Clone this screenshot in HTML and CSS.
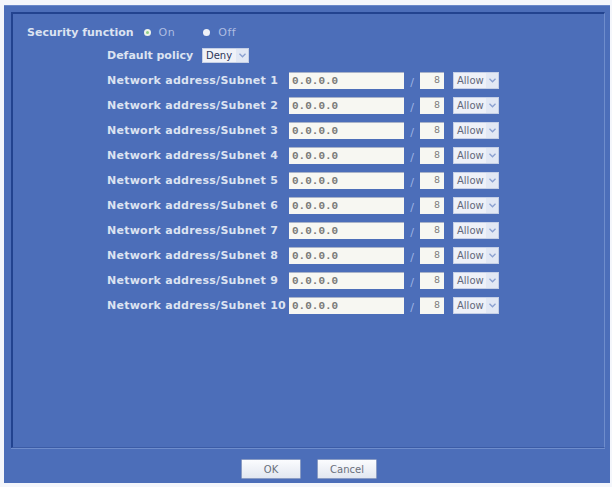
FILE: index.html
```html
<!DOCTYPE html>
<html lang="en">
<head>
    <meta charset="UTF-8">
    <title>Security</title>
    <link rel="stylesheet" href="styles.css">
</head>
<body>

<div class="frame">
    <div class="panel">

        <div class="security">
            <span class="sec-label">Security function</span>
            <span class="radio on"></span><span class="opt">On</span>
            <span class="radio off"></span><span class="opt">Off</span>
        </div>

        <div class="rules">
            <div class="policy">
                <span class="policy-label">Default policy</span>
                <span class="combo deny"><span class="val">Deny</span><span class="arrow"><svg width="7" height="5" viewBox="0 0 7 5"><path d="M0.5 0.8 L3.5 3.8 L6.5 0.8" fill="none" stroke="#8aa0d0" stroke-width="1.3"/></svg></span></span>
            </div>

            <div class="row"><span class="lbl">Network address/Subnet 1</span><span class="addr">0.0.0.0</span><span class="slash">/</span><span class="mask">8</span><span class="combo"><span class="val">Allow</span><span class="arrow"><svg width="7" height="5" viewBox="0 0 7 5"><path d="M0.5 0.8 L3.5 3.8 L6.5 0.8" fill="none" stroke="#8aa0d0" stroke-width="1.3"/></svg></span></span></div>
            <div class="row"><span class="lbl">Network address/Subnet 2</span><span class="addr">0.0.0.0</span><span class="slash">/</span><span class="mask">8</span><span class="combo"><span class="val">Allow</span><span class="arrow"><svg width="7" height="5" viewBox="0 0 7 5"><path d="M0.5 0.8 L3.5 3.8 L6.5 0.8" fill="none" stroke="#8aa0d0" stroke-width="1.3"/></svg></span></span></div>
            <div class="row"><span class="lbl">Network address/Subnet 3</span><span class="addr">0.0.0.0</span><span class="slash">/</span><span class="mask">8</span><span class="combo"><span class="val">Allow</span><span class="arrow"><svg width="7" height="5" viewBox="0 0 7 5"><path d="M0.5 0.8 L3.5 3.8 L6.5 0.8" fill="none" stroke="#8aa0d0" stroke-width="1.3"/></svg></span></span></div>
            <div class="row"><span class="lbl">Network address/Subnet 4</span><span class="addr">0.0.0.0</span><span class="slash">/</span><span class="mask">8</span><span class="combo"><span class="val">Allow</span><span class="arrow"><svg width="7" height="5" viewBox="0 0 7 5"><path d="M0.5 0.8 L3.5 3.8 L6.5 0.8" fill="none" stroke="#8aa0d0" stroke-width="1.3"/></svg></span></span></div>
            <div class="row"><span class="lbl">Network address/Subnet 5</span><span class="addr">0.0.0.0</span><span class="slash">/</span><span class="mask">8</span><span class="combo"><span class="val">Allow</span><span class="arrow"><svg width="7" height="5" viewBox="0 0 7 5"><path d="M0.5 0.8 L3.5 3.8 L6.5 0.8" fill="none" stroke="#8aa0d0" stroke-width="1.3"/></svg></span></span></div>
            <div class="row"><span class="lbl">Network address/Subnet 6</span><span class="addr">0.0.0.0</span><span class="slash">/</span><span class="mask">8</span><span class="combo"><span class="val">Allow</span><span class="arrow"><svg width="7" height="5" viewBox="0 0 7 5"><path d="M0.5 0.8 L3.5 3.8 L6.5 0.8" fill="none" stroke="#8aa0d0" stroke-width="1.3"/></svg></span></span></div>
            <div class="row"><span class="lbl">Network address/Subnet 7</span><span class="addr">0.0.0.0</span><span class="slash">/</span><span class="mask">8</span><span class="combo"><span class="val">Allow</span><span class="arrow"><svg width="7" height="5" viewBox="0 0 7 5"><path d="M0.5 0.8 L3.5 3.8 L6.5 0.8" fill="none" stroke="#8aa0d0" stroke-width="1.3"/></svg></span></span></div>
            <div class="row"><span class="lbl">Network address/Subnet 8</span><span class="addr">0.0.0.0</span><span class="slash">/</span><span class="mask">8</span><span class="combo"><span class="val">Allow</span><span class="arrow"><svg width="7" height="5" viewBox="0 0 7 5"><path d="M0.5 0.8 L3.5 3.8 L6.5 0.8" fill="none" stroke="#8aa0d0" stroke-width="1.3"/></svg></span></span></div>
            <div class="row"><span class="lbl">Network address/Subnet 9</span><span class="addr">0.0.0.0</span><span class="slash">/</span><span class="mask">8</span><span class="combo"><span class="val">Allow</span><span class="arrow"><svg width="7" height="5" viewBox="0 0 7 5"><path d="M0.5 0.8 L3.5 3.8 L6.5 0.8" fill="none" stroke="#8aa0d0" stroke-width="1.3"/></svg></span></span></div>
            <div class="row"><span class="lbl">Network address/Subnet 10</span><span class="addr">0.0.0.0</span><span class="slash">/</span><span class="mask">8</span><span class="combo"><span class="val">Allow</span><span class="arrow"><svg width="7" height="5" viewBox="0 0 7 5"><path d="M0.5 0.8 L3.5 3.8 L6.5 0.8" fill="none" stroke="#8aa0d0" stroke-width="1.3"/></svg></span></span></div>
        </div>

    </div>

    <div class="footer">
        <button class="btn">OK</button>
        <button class="btn">Cancel</button>
    </div>
</div>

</body>
</html>
```

FILE: styles.css
```css
body { margin: 0; background: #f4f6fb; font-family: "DejaVu Sans", sans-serif; font-size: 11px; }

.frame { margin: 5px 2px 0 4px; height: 478px; box-sizing: border-box; padding: 6px 5px 0 7px; background: #4c6eb9; border-top: 1px solid #6a88c8; }
.panel { height: 436px; box-sizing: border-box; padding: 10px 0 0 14px; border-top: 2px solid #22438f; border-left: 2px solid #22438f; border-right: 1px solid #6f8dcc; border-bottom: 1px solid #3c5ca6; box-shadow: 0 1px 0 #6f8dcc; }

.security { display: flex; align-items: center; height: 16px; color: #dce3f1; font-weight: bold; }
.sec-label { margin-right: 10px; }
.radio { width: 7px; height: 7px; border-radius: 50%; box-sizing: border-box; margin-right: 8px; }
.radio.on { background: #8fcf86; border: 2px solid #eef3ea; }
.radio.off { background: #eef1f7; }
.opt { font-weight: normal; color: #aebde2; letter-spacing: 0.5px; margin-right: 28px; }

.rules { margin-left: 80px; margin-top: 7px; display: flex; flex-direction: column; gap: 8px; }
.policy { display: flex; align-items: center; height: 17px; color: #dce3f1; font-weight: bold; }
.policy-label { width: 95px; }

.row { display: flex; align-items: center; height: 17px; }
.lbl { width: 182px; color: #dce3f1; font-weight: bold; letter-spacing: 0.25px; white-space: nowrap; }
.addr { width: 115px; height: 17px; box-sizing: border-box; padding: 2px 0 0 3px; background: #f7f7f2; border-top: 1px solid #a9b3c9; font-family: "Liberation Mono", monospace; font-size: 11px; font-weight: bold; color: #7a7a78; }
.slash { width: 16px; text-align: center; color: #9fb5e4; font-size: 11px; padding-top: 3px; }
.mask { width: 24px; height: 17px; box-sizing: border-box; padding: 2px 4px 0 0; text-align: right; background: #f7f7f2; border-top: 1px solid #a9b3c9; font-family: "Liberation Mono", monospace; font-size: 10px; color: #7a7a78; margin-right: 9px; }

.combo { display: flex; align-items: center; width: 46px; height: 17px; box-sizing: border-box; background: #eef1f8; border: 1px solid #c5cfe5; font-size: 10px; font-weight: normal; color: #62687a; letter-spacing: 0; }
.combo .val { flex: 1; padding-left: 3px; }
.combo .arrow { width: 12px; height: 100%; display: flex; align-items: center; justify-content: center; background: #e2e8f4; }
.combo.deny { width: 47px; height: 15px; color: #2c3658; background: #f0f2f8; }

.footer { display: flex; justify-content: center; gap: 16px; padding-top: 11px; padding-left: 2px; }
.btn { width: 60px; height: 20px; padding: 0; background: linear-gradient(#fbfcfe, #e2e7f0); border: 1px solid #8a9cc4; border-radius: 1px; font-family: "DejaVu Sans", sans-serif; font-size: 10px; color: #6a6f7c; }
```
